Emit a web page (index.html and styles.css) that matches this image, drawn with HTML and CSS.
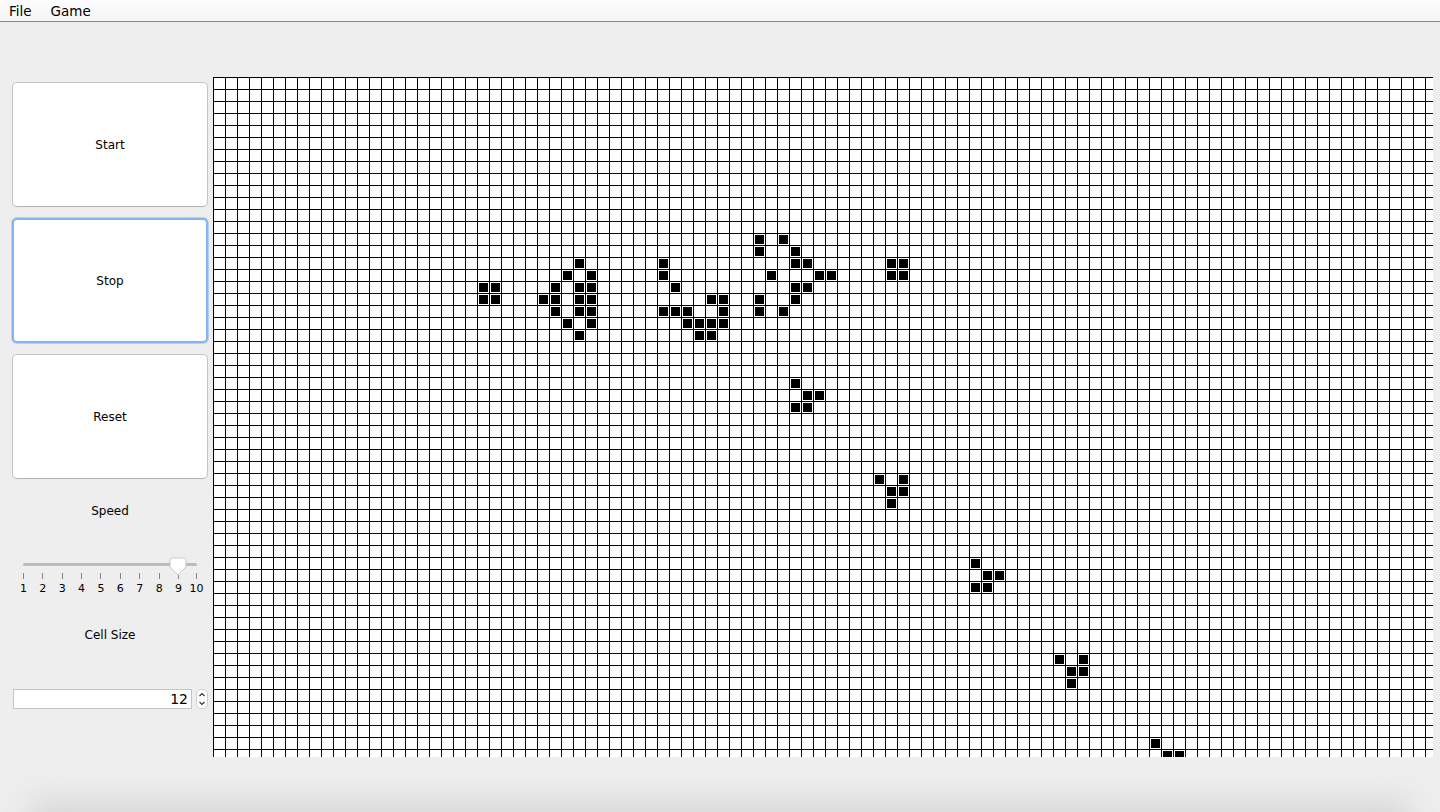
FILE: index.html
```html
<!DOCTYPE html>
<html lang="en">
<head>
  <meta charset="UTF-8" />
  <meta name="viewport" content="width=device-width, initial-scale=1.0"/>
  <title>Game of Life</title>
  <link rel="stylesheet" href="styles.css">
</head>
<body>

  <nav class="menu-bar">
    <span>File</span>
    <span>Game</span>
  </nav>

  <div class="content">
    <aside class="sidebar">
      <button class="big-button">Start</button>
      <button class="big-button focused">Stop</button>
      <button class="big-button">Reset</button>

      <div class="label">Speed</div>

      <div class="slider">
        <div class="track"></div>
        <svg class="thumb" width="18" height="19" viewBox="0 0 18 19">
          <path d="M3 1H15Q17 1 17 3V10L9 18L1 10V3Q1 1 3 1Z" fill="#fff" stroke="#c8c8c8"/>
        </svg>
        <div class="ticks">
          <div class="tick">1</div>
          <div class="tick">2</div>
          <div class="tick">3</div>
          <div class="tick">4</div>
          <div class="tick">5</div>
          <div class="tick">6</div>
          <div class="tick">7</div>
          <div class="tick">8</div>
          <div class="tick">9</div>
          <div class="tick">10</div>
        </div>
      </div>

      <div class="label cell-label">Cell Size</div>

      <div class="spinner">
        <input class="spinner-input" type="text" value="12" />
        <div class="stepper">
          <svg width="12" height="20" viewBox="0 0 12 20">
            <path d="M3.5 7L6 4.5L8.500 7M3.500 13L6 15.500L8.500 13" fill="none" stroke="#333" stroke-width="1.200"/>
          </svg>
        </div>
      </div>
    </aside>

    <main class="board">
      <svg class="cells" width="1220" height="680">
        <!-- x = column * 12 + 2, y = row * 12 + 2 -->
        <g fill="#000">
          <rect x="266" y="206" width="9" height="9"/><rect x="278" y="206" width="9" height="9"/>
          <rect x="266" y="218" width="9" height="9"/><rect x="278" y="218" width="9" height="9"/>

          <rect x="362" y="182" width="9" height="9"/>
          <rect x="350" y="194" width="9" height="9"/><rect x="374" y="194" width="9" height="9"/>
          <rect x="338" y="206" width="9" height="9"/><rect x="362" y="206" width="9" height="9"/><rect x="374" y="206" width="9" height="9"/>
          <rect x="326" y="218" width="9" height="9"/><rect x="338" y="218" width="9" height="9"/><rect x="362" y="218" width="9" height="9"/><rect x="374" y="218" width="9" height="9"/>
          <rect x="338" y="230" width="9" height="9"/><rect x="362" y="230" width="9" height="9"/><rect x="374" y="230" width="9" height="9"/>
          <rect x="350" y="242" width="9" height="9"/><rect x="374" y="242" width="9" height="9"/>
          <rect x="362" y="254" width="9" height="9"/>

          <rect x="446" y="182" width="9" height="9"/>
          <rect x="446" y="194" width="9" height="9"/>
          <rect x="458" y="206" width="9" height="9"/>
          <rect x="494" y="218" width="9" height="9"/><rect x="506" y="218" width="9" height="9"/>
          <rect x="446" y="230" width="9" height="9"/><rect x="458" y="230" width="9" height="9"/><rect x="470" y="230" width="9" height="9"/><rect x="506" y="230" width="9" height="9"/>
          <rect x="470" y="242" width="9" height="9"/><rect x="482" y="242" width="9" height="9"/><rect x="494" y="242" width="9" height="9"/><rect x="506" y="242" width="9" height="9"/>
          <rect x="482" y="254" width="9" height="9"/><rect x="494" y="254" width="9" height="9"/>

          <rect x="542" y="158" width="9" height="9"/><rect x="566" y="158" width="9" height="9"/>
          <rect x="542" y="170" width="9" height="9"/><rect x="578" y="170" width="9" height="9"/>
          <rect x="578" y="182" width="9" height="9"/><rect x="590" y="182" width="9" height="9"/>
          <rect x="554" y="194" width="9" height="9"/><rect x="602" y="194" width="9" height="9"/><rect x="614" y="194" width="9" height="9"/>
          <rect x="578" y="206" width="9" height="9"/><rect x="590" y="206" width="9" height="9"/>
          <rect x="542" y="218" width="9" height="9"/><rect x="578" y="218" width="9" height="9"/>
          <rect x="542" y="230" width="9" height="9"/><rect x="566" y="230" width="9" height="9"/>

          <rect x="674" y="182" width="9" height="9"/><rect x="686" y="182" width="9" height="9"/>
          <rect x="674" y="194" width="9" height="9"/><rect x="686" y="194" width="9" height="9"/>

          <rect x="578" y="302" width="9" height="9"/>
          <rect x="590" y="314" width="9" height="9"/><rect x="602" y="314" width="9" height="9"/>
          <rect x="578" y="326" width="9" height="9"/><rect x="590" y="326" width="9" height="9"/>

          <rect x="662" y="398" width="9" height="9"/><rect x="686" y="398" width="9" height="9"/>
          <rect x="674" y="410" width="9" height="9"/><rect x="686" y="410" width="9" height="9"/>
          <rect x="674" y="422" width="9" height="9"/>

          <rect x="758" y="482" width="9" height="9"/>
          <rect x="770" y="494" width="9" height="9"/><rect x="782" y="494" width="9" height="9"/>
          <rect x="758" y="506" width="9" height="9"/><rect x="770" y="506" width="9" height="9"/>

          <rect x="842" y="578" width="9" height="9"/><rect x="866" y="578" width="9" height="9"/>
          <rect x="854" y="590" width="9" height="9"/><rect x="866" y="590" width="9" height="9"/>
          <rect x="854" y="602" width="9" height="9"/>

          <rect x="938" y="662" width="9" height="9"/>
          <rect x="950" y="674" width="9" height="9"/><rect x="962" y="674" width="9" height="9"/>
        </g>
      </svg>
    </main>
  </div>

  <div class="window-shadow"></div>

</body>
</html>
```

FILE: styles.css
```css
* {
  box-sizing: border-box;
}

html, body {
  height: 100%;
}

body {
  position: relative;
  margin: 0;
  overflow: hidden;
  font-family: "DejaVu Sans", sans-serif;
  font-size: 12px;
  color: #000;
  background-color: #eee;
}

.menu-bar {
  display: flex;
  gap: 19px;
  height: 22px;
  padding-left: 9px;
  font-size: 13.5px;
  line-height: 22px;
  background: linear-gradient(#fdfdfd, #f5f5f5);
  border-bottom: 1px solid #8a8a8a;
}

.content {
  display: flex;
  gap: 5px;
  padding: 55px 0 0 12px;
}

.sidebar {
  display: flex;
  flex-direction: column;
  width: 196px;
  margin-top: 5px;
}

.big-button {
  height: 125px;
  margin-bottom: 11px;
  padding: 0;
  font: inherit;
  color: inherit;
  background-color: #fff;
  border: 1px solid #c4c4c4;
  border-bottom-color: #b0b0b0;
  border-radius: 5px;
}

.big-button.focused {
  border: 2px solid #85b5ee;
  box-shadow: 0 0 0 1px #b5d2f3;
}

.label {
  height: 40px;
  line-height: 42px;
  text-align: center;
}

.slider {
  position: relative;
  padding: 33px 0 0 2px;
}

.track {
  width: 174px;
  height: 3px;
  margin-left: 9px;
  border-radius: 2px;
  background-color: #bbb;
}

.thumb {
  position: absolute;
  top: 27px;
  left: 157px;
}

.ticks {
  display: flex;
  margin-top: 7px;
  margin-left: -0.3px;
}

.tick {
  width: 19.4px;
  font-size: 11px;
  line-height: 15px;
  text-align: center;
}

.tick::before {
  content: "";
  display: block;
  width: 1px;
  height: 6px;
  margin: 0 auto 2px;
  background-color: #888;
}

.tick:last-child {
  margin-left: -1.4px;
}

.cell-label {
  margin-top: 18px;
}

.spinner {
  display: flex;
  gap: 4px;
  margin-top: 35px;
  padding-left: 1px;
}

.spinner-input {
  width: 179px;
  height: 20px;
  padding: 0 3px;
  font: inherit;
  font-size: 14px;
  text-align: right;
  color: inherit;
  background-color: #fff;
  border: 1px solid #c4c4c4;
  border-radius: 0;
}

.stepper {
  width: 12px;
  height: 20px;
  background-color: #fff;
  border: 1px solid #cfcfcf;
  border-radius: 5px;
  overflow: hidden;
}

.stepper svg {
  display: block;
  margin: -1px;
}

.board {
  width: 1220px;
  height: 680px;
  background-color: #fff;
  background-image:
    linear-gradient(#000 1px, transparent 1px),
    linear-gradient(90deg, #000 1px, transparent 1px);
  background-size: 12px 12px;
}

.cells {
  display: block;
}

/* soft shadow along the bottom of the window */
.window-shadow {
  position: absolute;
  left: 30px;
  right: 30px;
  bottom: -30px;
  height: 40px;
  background-color: #d4d4d4;
  filter: blur(16px);
}
```
